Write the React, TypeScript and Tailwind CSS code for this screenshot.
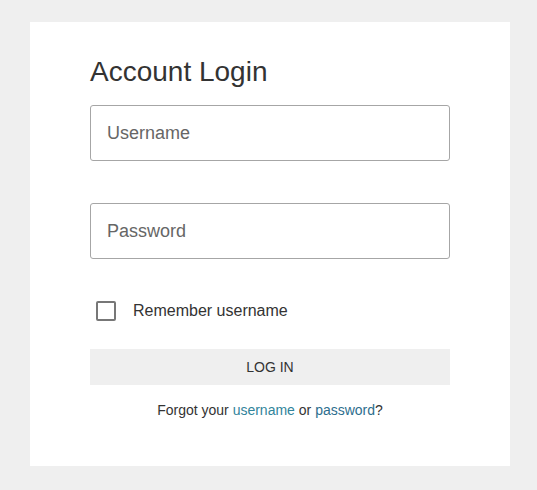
import React from 'react';

const App = () => {
  return (
    <div className="min-h-[490px] bg-[#efefef] pt-[22px] px-[30px] pb-6 font-['Liberation_Sans',Arial,sans-serif]">
      <div className="w-[480px] bg-white pt-[34px] pb-[46px]">
        <div className="w-[360px] mx-auto">
          <h1 className="text-[28px] leading-[32px] text-[#333]">Account Login</h1>

          <input
            type="text"
            placeholder="Username"
            className="mt-[17px] block w-full h-[56px] rounded-[3px] border border-[#a6a6a6] px-4 text-[18px] text-[#333] placeholder:text-[#666] outline-none"
          />
          <input
            type="password"
            placeholder="Password"
            className="mt-[42px] block w-full h-[56px] rounded-[3px] border border-[#a6a6a6] px-4 text-[18px] text-[#333] placeholder:text-[#666] outline-none"
          />

          <label className="mt-[42px] flex items-center h-5 ml-[6px]">
            <span className="w-5 h-5 rounded-[2px] border-2 border-[#777]" />
            <span className="ml-[17px] text-[16px] text-[#333]">Remember username</span>
          </label>

          <button className="mt-[28px] block w-full h-[36px] bg-[#efefef] text-[14px] text-[#333]">
            LOG IN
          </button>

          <p className="mt-[15px] text-center text-[14px] leading-5 text-[#333]">
            Forgot your <a className="text-[#31849b]">username</a> or{' '}
            <a className="text-[#2d6e8e]">password</a>?
          </p>
        </div>
      </div>
    </div>
  );
};

export default App;
